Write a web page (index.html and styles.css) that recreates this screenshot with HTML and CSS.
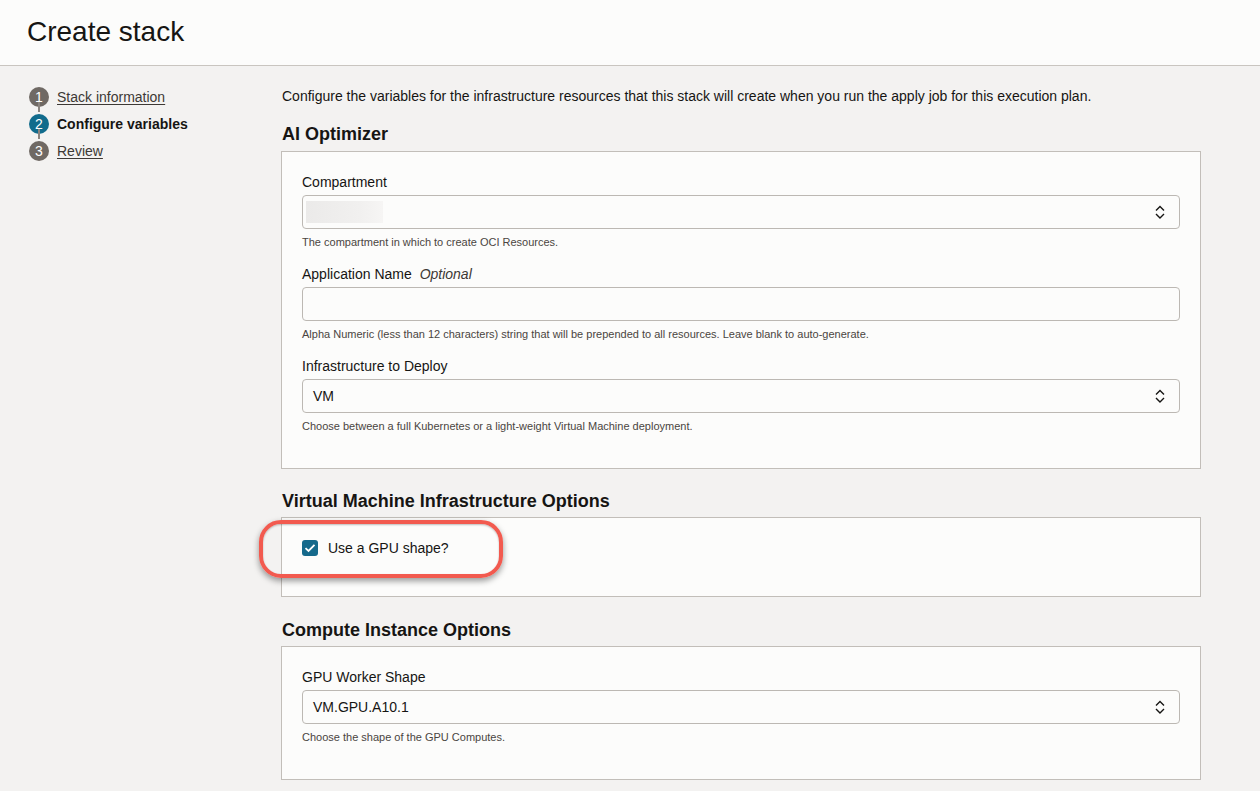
FILE: index.html
```html
<!DOCTYPE html>
<html lang="en">
<head>
<meta charset="utf-8">
<title>Create stack</title>
<link rel="stylesheet" href="styles.css">
</head>
<body>
<header class="page-header">
  <h1 class="page-title">Create stack</h1>
</header>
<div class="layout">
  <nav class="steps">
    <div class="step">
      <span class="step-num">1</span>
      <a class="step-link" href="#">Stack information</a>
    </div>
    <div class="step">
      <span class="step-num step-num-active">2</span>
      <span class="step-current">Configure variables</span>
    </div>
    <div class="step">
      <span class="step-num">3</span>
      <a class="step-link" href="#">Review</a>
    </div>
  </nav>
  <main class="content">
    <p class="intro">Configure the variables for the infrastructure resources that this stack will create when you run the apply job for this execution plan.</p>

    <h2 class="section-title">AI Optimizer</h2>
    <section class="panel">
      <div class="field">
        <label class="field-label">Compartment</label>
        <div class="select">
          <span class="redacted"></span>
          <svg class="chevrons" width="12" height="16" viewBox="0 0 12 16"><path d="M2 6.5 6 2.5 10 6.5M2 10 6 14 10 10" fill="none" stroke="#161513" stroke-width="1.4"/></svg>
        </div>
        <div class="help">The compartment in which to create OCI Resources.</div>
      </div>
      <div class="field">
        <label class="field-label">Application Name <em class="optional">Optional</em></label>
        <div class="input"></div>
        <div class="help">Alpha Numeric (less than 12 characters) string that will be prepended to all resources. Leave blank to auto-generate.</div>
      </div>
      <div class="field">
        <label class="field-label">Infrastructure to Deploy</label>
        <div class="select">
          <span class="select-value">VM</span>
          <svg class="chevrons" width="12" height="16" viewBox="0 0 12 16"><path d="M2 6.5 6 2.5 10 6.5M2 10 6 14 10 10" fill="none" stroke="#161513" stroke-width="1.4"/></svg>
        </div>
        <div class="help">Choose between a full Kubernetes or a light-weight Virtual Machine deployment.</div>
      </div>
    </section>

    <h2 class="section-title">Virtual Machine Infrastructure Options</h2>
    <section class="panel panel-check">
      <div class="check-row">
        <span class="checkbox">
          <svg width="12" height="10" viewBox="0 0 12 10"><path d="M1.5 5.2 4.5 8 10.5 1.8" fill="none" stroke="#fff" stroke-width="1.8"/></svg>
        </span>
        <span class="check-label">Use a GPU shape?</span>
      </div>
      <div class="highlight"></div>
    </section>

    <h2 class="section-title">Compute Instance Options</h2>
    <section class="panel">
      <div class="field">
        <label class="field-label">GPU Worker Shape</label>
        <div class="select">
          <span class="select-value">VM.GPU.A10.1</span>
          <svg class="chevrons" width="12" height="16" viewBox="0 0 12 16"><path d="M2 6.5 6 2.5 10 6.5M2 10 6 14 10 10" fill="none" stroke="#161513" stroke-width="1.4"/></svg>
        </div>
        <div class="help">Choose the shape of the GPU Computes.</div>
      </div>
    </section>
  </main>
</div>
</body>
</html>
```

FILE: styles.css
```css
* { box-sizing: border-box; }

html, body {
  margin: 0;
  padding: 0;
}

body {
  background: #f3f2f1;
  color: #161513;
  font-family: "Liberation Sans", Arial, Helvetica, sans-serif;
  font-size: 14px;
  height: 791px;
  overflow: hidden;
}

.page-header {
  height: 66px;
  background: #fcfcfb;
  border-bottom: 1px solid #c9c5c0;
  padding: 0 27px;
  display: flex;
  align-items: center;
}

.page-title {
  margin: 0;
  font-size: 28px;
  font-weight: 400;
  padding-bottom: 2px;
}

.layout {
  display: flex;
}

.steps {
  width: 281px;
  flex: none;
  padding: 17px 0 0 29px;
  display: flex;
  flex-direction: column;
}

.step {
  display: flex;
  align-items: center;
  gap: 8px;
  height: 27px;
  position: relative;
}

.step + .step::before {
  content: "";
  position: absolute;
  left: 9px;
  top: -8px;
  width: 1.5px;
  height: 10px;
  background: #8a847f;
}

.step-num {
  width: 20px;
  height: 20px;
  border-radius: 50%;
  background: #6f6964;
  color: #fff;
  font-size: 14px;
  display: flex;
  align-items: center;
  justify-content: center;
  flex: none;
}

.step-num-active {
  background: #116b8c;
}

.step-link {
  color: #3d3935;
  text-decoration: underline;
  text-underline-offset: 2px;
}

.step-current {
  font-weight: 700;
  color: #161513;
}

.content {
  width: 920px;
  padding-top: 20px;
}

.intro {
  margin: 0 0 0 1px;
  line-height: 20px;
  color: #161513;
}

.section-title {
  margin: 17px 0 6px 1px;
  font-size: 18px;
  line-height: 22px;
  font-weight: 700;
}

.panel + .section-title {
  margin-top: 21px;
  margin-bottom: 5px;
}

.panel-check + .section-title {
  margin-top: 22px;
  margin-bottom: 5px;
}

.panel {
  background: #fcfcfb;
  border: 1px solid #c2beb9;
  padding: 22px 20px 35px;
  display: flex;
  flex-direction: column;
  gap: 17px;
  position: relative;
}

.field {
  display: flex;
  flex-direction: column;
}

.field-label {
  font-size: 14px;
  line-height: 17px;
  margin-bottom: 4px;
}

.optional {
  font-style: italic;
  color: #3d3935;
  margin-left: 4px;
}

.select,
.input {
  height: 34px;
  border: 1px solid #bcb8b3;
  border-radius: 4px;
  background: #fcfcfb;
  display: flex;
  align-items: center;
  padding: 0 13px 0 10px;
}

.select-value {
  flex: 1;
  font-size: 14px;
}

.redacted {
  width: 77px;
  height: 22px;
  margin-left: -7px;
  background: linear-gradient(90deg, #ebeae9, #f1f0ef 70%, #f6f5f4);
}

.chevrons {
  margin-left: auto;
  flex: none;
}

.help {
  margin-top: 6px;
  font-size: 11px;
  line-height: 14px;
  color: #4a4541;
}

.panel-check {
  padding: 22px 20px 40px;
  height: 80px;
}

.check-row {
  display: flex;
  align-items: center;
  gap: 10px;
  height: 16px;
}

.checkbox {
  width: 16px;
  height: 16px;
  border-radius: 3px;
  background: #15698b;
  display: flex;
  align-items: center;
  justify-content: center;
}

.check-label {
  font-size: 14px;
}

.highlight {
  position: absolute;
  left: -23px;
  top: 2px;
  width: 244px;
  height: 58px;
  border: 4px solid #f25a4f;
  border-radius: 22px;
  box-shadow: 0 3px 6px rgba(0, 0, 0, 0.4), inset 0 1px 2px rgba(0,0,0,0.25);
  pointer-events: none;
}
```
